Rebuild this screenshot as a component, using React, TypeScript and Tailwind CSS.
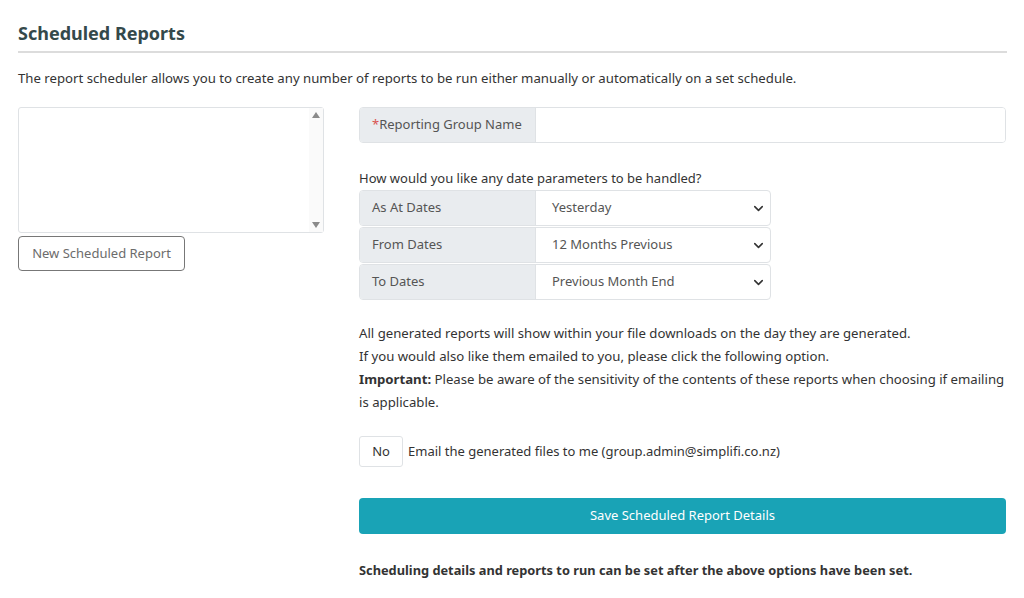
import { ChevronDown } from 'lucide-react';

const dateRows = [
    { label: 'As At Dates', value: 'Yesterday' },
    { label: 'From Dates', value: '12 Months Previous' },
    { label: 'To Dates', value: 'Previous Month End' },
];

export default function App() {
    return (
        <div className="w-[1024px] h-[598px] bg-white text-[#333] overflow-hidden px-[18px] pt-[21px]" style={{ fontFamily: '"Noto Sans", "Open Sans", sans-serif' }}>
            <h1 className="text-[18px] font-bold text-[#34494b] leading-[24px] pb-[6px] border-b-2 border-[#dcdcdc] w-[989px]">
                Scheduled Reports
            </h1>
            <p className="text-[13.2px] mt-[16px] leading-[18px]">
                The report scheduler allows you to create any number of reports to be run either manually or automatically on a set schedule.
            </p>

            <div className="flex mt-[20px]">
                <div className="w-[306px] shrink-0">
                    <div className="h-[126px] border border-[#dfe2e5] rounded-[3px] flex justify-end">
                        <div className="w-[14px] flex flex-col justify-between items-center py-[4px] bg-[#fafafa]">
                            <span className="w-0 h-0 border-l-[4px] border-r-[4px] border-b-[6px] border-l-transparent border-r-transparent border-b-[#8a8a8a]" />
                            <span className="w-0 h-0 border-l-[4px] border-r-[4px] border-t-[6px] border-l-transparent border-r-transparent border-t-[#8a8a8a]" />
                        </div>
                    </div>
                    <button className="mt-[3px] h-[35px] w-[167px] border border-[#777] rounded-[4px] text-[13px] text-[#6c6c6c] bg-white">
                        New Scheduled Report
                    </button>
                </div>

                <div className="ml-[35px] w-[648px]">
                    <div className="flex h-[36px] border border-[#dfe2e5] rounded-[4px] overflow-hidden">
                        <div className="w-[176px] bg-[#e9ecef] border-r border-[#dfe2e5] flex items-center pl-[12px] text-[13px] text-[#555]">
                            <span className="text-[#d9534f]">*</span>Reporting Group Name
                        </div>
                        <div className="flex-1 bg-white" />
                    </div>

                    <p className="text-[13px] mt-[26px] leading-[18px]">How would you like any date parameters to be handled?</p>
                    <div className="w-[412px] mt-[3px] flex flex-col gap-[1px]">
                        {dateRows.map((r) => (
                            <div key={r.label} className="flex h-[36px] border border-[#dfe2e5] rounded-[4px] overflow-hidden">
                                <div className="w-[176px] bg-[#e9ecef] border-r border-[#dfe2e5] flex items-center pl-[12px] text-[13px] text-[#555]">
                                    {r.label}
                                </div>
                                <div className="flex-1 flex items-center justify-between pl-[16px] pr-[4px] text-[13px] text-[#555]">
                                    <span>{r.value}</span>
                                    <ChevronDown size={15} strokeWidth={2.5} className="text-[#333]" />
                                </div>
                            </div>
                        ))}
                    </div>

                    <div className="mt-[22px] text-[13.2px] leading-[23px]">
                        <p>All generated reports will show within your file downloads on the day they are generated.</p>
                        <p>If you would also like them emailed to you, please click the following option.</p>
                        <p><b>Important:</b> Please be aware of the sensitivity of the contents of these reports when choosing if emailing is applicable.</p>
                    </div>

                    <div className="mt-[22px] flex items-center">
                        <div className="w-[44px] h-[31px] border border-[#dfe2e5] rounded-[3px] flex items-center justify-center text-[13px] text-[#333]">
                            No
                        </div>
                        <span className="ml-[5px] text-[13px]">Email the generated files to me (group.admin@simplifi.co.nz)</span>
                    </div>

                    <button className="mt-[31px] w-full h-[36px] rounded-[4px] bg-[#19a3b6] text-white text-[13px]">
                        Save Scheduled Report Details
                    </button>

                    <p className="mt-[27px] text-[12.8px] font-bold">
                        Scheduling details and reports to run can be set after the above options have been set.
                    </p>
                </div>
            </div>
        </div>
    );
}
